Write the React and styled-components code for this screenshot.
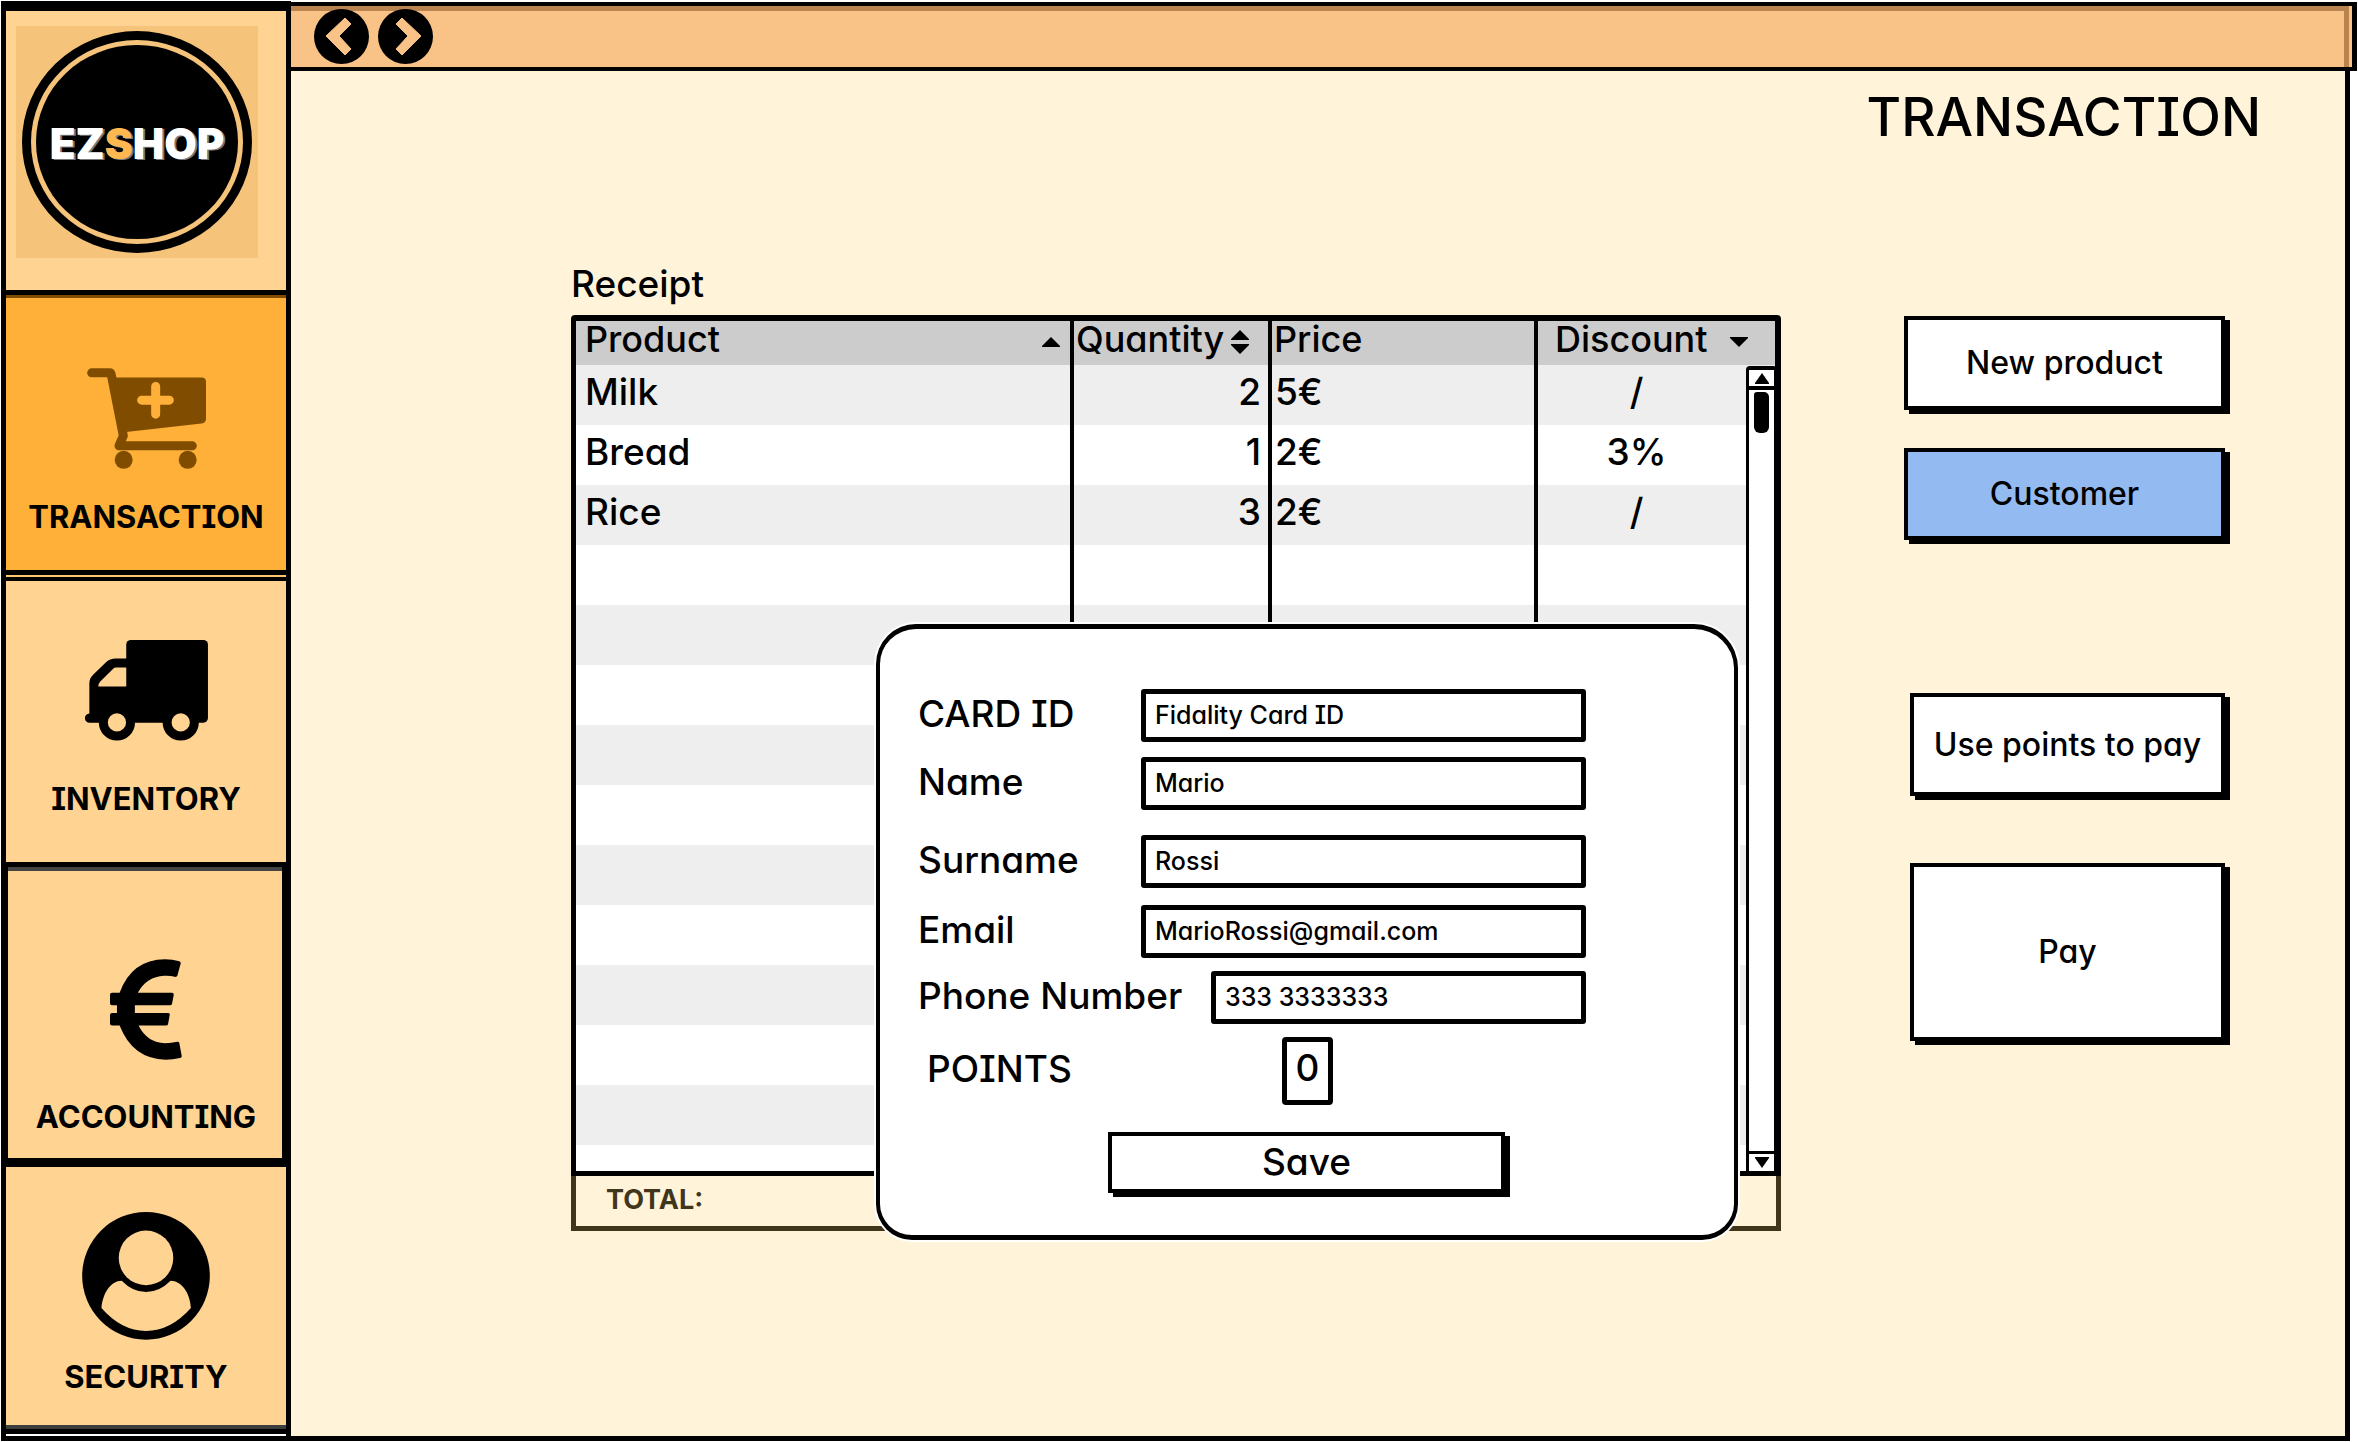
import React from "react";
import styled, { createGlobalStyle, css } from "styled-components";

const ink = "#000";
const cream = "#fff4d9";
const peach = "#ffd391";

const GlobalStyle = createGlobalStyle`
  *, *::before, *::after { box-sizing: border-box; }
  body {
    margin: 0;
    background: #fff;
    color: ${ink};
    font-family: Inter, "Open Sans", sans-serif;
    font-weight: 500;
    font-feature-settings: "cv11", "cv08";
  }
  button, input {
    font: inherit;
    font-feature-settings: inherit;
    color: inherit;
  }
  h1, h2, p { margin: 0; font-weight: 500; }
`;

const Shell = styled.div`
  display: grid;
  grid-template-columns: 291px minmax(0, 1fr);
  min-height: 100vh;
  padding: 1px 1px 1px 0;
`;

/* ---------- sidebar ---------- */

const Sidebar = styled.nav`
  display: flex;
  flex-direction: column;
  margin-left: 1px;
  border: solid ${ink};
  border-width: 10px 5px 5px;
  background: #fff;
`;

const LogoCell = styled.div`
  padding: 15px 28px 32px 10px;
  background: ${peach};
`;

const LogoTile = styled.div`
  height: 232px;
  padding: 5px 6px;
  background: #f5c379;
`;

const LogoRing = styled.div`
  height: 100%;
  padding: 5px;
  border: 9px solid ${ink};
  border-radius: 50%;
`;

const LogoDisc = styled.div`
  display: flex;
  align-items: center;
  justify-content: center;
  height: 100%;
  padding-top: 4px;
  border-radius: 50%;
  background: ${ink};
  color: #fff;
  font-size: 42px;
  font-weight: 900;
  line-height: 48px;
  text-shadow: 2px 1px 0 #77797c;
`;

const LogoAccent = styled.span`
  color: #ffb84f;
`;

const NavItem = styled.a`
  position: relative;
  display: flex;
  flex-direction: column;
  align-items: center;
  gap: ${(p) => p.$gap}px;
  padding: ${(p) => p.$top}px 0 ${(p) => p.$bottom}px;
  border-top: ${(p) => p.$line || 5}px solid ${ink};
  background: ${(p) => (p.$active ? "#ffb038" : peach)};
  box-shadow: ${(p) => p.$inset || "none"};
  color: ${ink};
  font-size: 31px;
  font-weight: 700;
  line-height: 40px;
  text-decoration: none;
  ${(p) =>
    p.$active &&
    css`
      border-bottom: 5px solid ${ink};
      margin-bottom: 2px;
    `}
  &:last-child { border-bottom: 5px solid ${ink}; }
  svg { display: block; }
`;

/* ---------- page ---------- */

const Page = styled.div`
  display: flex;
  flex-direction: column;
  min-width: 0;
`;

const TopBar = styled.header`
  position: relative;
  display: flex;
  gap: 9px;
  margin-top: 1px;
  padding: 3px 23px;
  border: solid ${ink};
  border-width: 4px 5px 4px 0;
  background: #f9c387;
  &::after {
    content: "";
    position: absolute;
    inset: 0 3px 0 0;
    border: solid #b98450;
    border-width: 5px 5px 0 0;
    pointer-events: none;
  }
`;

const RoundButton = styled.button`
  position: relative;
  z-index: 1;
  display: block;
  width: 55px;
  height: 55px;
  padding: 0;
  border: 0;
  border-radius: 50%;
  background: ${ink};
  svg { display: block; }
`;

const Content = styled.main`
  flex: 1;
  margin-right: 7px;
  padding: 16px 0 0;
  border: solid ${ink};
  border-width: 0 5px 5px 0;
  background: ${cream};
`;

const Title = styled.h1`
  padding-right: 84px;
  font-size: 53px;
  line-height: 60px;
  text-align: right;
`;

const Workspace = styled.div`
  display: flex;
  align-items: flex-start;
  gap: 123px;
  margin-top: 113px;
  padding: 0 120px 0 280px;
`;

/* ---------- receipt ---------- */

const Receipt = styled.section`
  position: relative;
  flex: 1;
  min-width: 0;
`;

const SectionTitle = styled.h2`
  padding-bottom: 7px;
  font-size: 37px;
  line-height: 48px;
`;

const TableFrame = styled.div`
  position: relative;
  border: solid ${ink};
  border-width: 6px 6px 5px 5px;
  border-radius: 4px 4px 0 0;
  background: #fff;
`;

const Table = styled.table`
  width: 100%;
  table-layout: fixed;
  border-spacing: 0;
  font-size: 37px;
  line-height: 36px;
`;

const Column = styled.col`
  width: ${(p) => p.$width};
`;

const HeadCell = styled.th`
  height: 44px;
  padding: 0 ${(p) => p.$right || 0}px 8px ${(p) => p.$left}px;
  border-right: ${(p) => (p.$last ? 0 : 4)}px solid ${ink};
  background: #ccc;
  font-size: 36px;
  font-weight: 500;
  text-align: left;
`;

const SortButton = styled.button`
  display: flex;
  align-items: center;
  justify-content: ${(p) => (p.$spread ? "space-between" : "flex-start")};
  gap: ${(p) => p.$gap || 0}px;
  width: 100%;
  padding: 0;
  border: 0;
  background: none;
  line-height: 36px;
  svg { flex: none; margin-top: 5px; }
`;

const Row = styled.tr`
  height: ${(p) => (p.$short ? 26 : 60)}px;
  &:nth-child(odd) { background: #eee; }
`;

const Cell = styled.td`
  padding: ${(p) => p.$pad};
  border-right: ${(p) => (p.$last ? 0 : 4)}px solid ${ink};
  text-align: ${(p) => p.$align || "left"};
`;

const ScrollBar = styled.div`
  position: absolute;
  top: 45px;
  right: -2px;
  bottom: 0;
  display: flex;
  flex-direction: column;
  width: 31px;
  border: solid ${ink};
  border-width: 4px 3px 0 3px;
  border-radius: 4px 4px 0 0;
  background: #fff;
`;

const ScrollButton = styled.button`
  display: flex;
  align-items: center;
  justify-content: center;
  height: 20px;
  padding: 0;
  border: solid ${ink};
  border-width: ${(p) => (p.$down ? "3px 0 0" : "0 0 4px")};
  background: #fff;
`;

const ScrollTrack = styled.div`
  flex: 1;
  padding: 2px 5px;
`;

const ScrollThumb = styled.div`
  height: 41px;
  border-radius: 3px 5px 6px 6px;
  background: ${ink};
`;

const Total = styled.p`
  height: 55px;
  padding: 6px 30px 0;
  border: solid #3f361b;
  border-width: 0 5px 5px;
  box-shadow: 0 -1px 0 #fff;
  color: #3f361b;
  font-size: 27px;
  font-weight: 700;
  line-height: 36px;
`;

/* ---------- customer dialog ---------- */

const Dialog = styled.form`
  position: absolute;
  top: 364px;
  left: 305px;
  right: 43px;
  display: flex;
  flex-direction: column;
  padding: 60px 148px 42px 38px;
  border: 5px solid ${ink};
  border-width: 5px 4px;
  border-radius: 40px 44px 36px 36px;
  background: #fff;
  box-shadow: 0 0 0 2px #fff;
`;

const Field = styled.div`
  display: flex;
  align-items: center;
  margin-bottom: ${(p) => p.$after}px;
`;

const Label = styled.label`
  flex: 0 0 ${(p) => p.$width || 223}px;
  padding: 0 0 4px ${(p) => p.$indent || 0}px;
  font-size: 37px;
  line-height: 44px;
  white-space: nowrap;
`;

const TextInput = styled.input`
  flex: 1;
  min-width: 0;
  height: 53px;
  padding: 0 10px 2px 9px;
  border: 5px solid ${ink};
  border-radius: 3px;
  background: #fff;
  font-size: 25px;
`;

const PointsInput = styled.input`
  width: 51px;
  height: 68px;
  padding: 0 0 8px;
  border: 5px solid ${ink};
  border-radius: 4px;
  background: #fff;
  font-size: 37px;
  text-align: center;
`;

/* ---------- buttons ---------- */

const Actions = styled.div`
  display: flex;
  flex-direction: column;
  align-items: flex-end;
  width: 321px;
  padding-top: 56px;
`;

const SketchButton = styled.button`
  width: ${(p) => p.$width || "100%"};
  height: ${(p) => p.$height}px;
  margin: ${(p) => p.$margin || 0};
  padding: 0 0 ${(p) => (p.$large ? 2 : 0)}px;
  border: 4px solid ${ink};
  background: ${(p) => (p.$selected ? "#94baf2" : "#fff")};
  box-shadow: 5px 4px 0 ${ink};
  font-size: ${(p) => (p.$large ? 37 : 32)}px;
  line-height: 40px;
  white-space: nowrap;
`;

/* ---------- drawings ---------- */

const CartIcon = () => (
  <svg width="119" height="101" viewBox="258 265 357 302" fill="#804d00" aria-hidden="true">
    <path
      d="M272 279H326Q330 279 331 285L367 468L354 498H574"
      fill="none"
      stroke="#804d00"
      strokeWidth="27"
      strokeLinecap="round"
      strokeLinejoin="round"
    />
    <path d="M330 293H602Q615 293 615 306V417Q615 429 602 431L355 459Z" />
    <path d="M464 320V403M422 361H505" stroke="#ffb038" strokeWidth="27" strokeLinecap="round" />
    <circle cx="368" cy="540" r="27" />
    <circle cx="560" cy="540" r="27" />
  </svg>
);

const TruckIcon = () => (
  <svg width="123" height="101" viewBox="260 240 370 304" aria-hidden="true">
    <rect x="384" y="240" width="246" height="249" rx="14" />
    <path d="M400 296H352Q335 296 323 307L285 344Q273 355 273 371V461A14 14 0 0 0 274 489H400Z" />
    <path d="M384 323H354Q348 323 344 327L306 365Q300 371 300 380H384Z" fill={peach} />
    <circle cx="356" cy="488" r="41" fill={peach} stroke={ink} strokeWidth="27" />
    <circle cx="548" cy="488" r="41" fill={peach} stroke={ink} strokeWidth="27" />
  </svg>
);

const EuroIcon = () => (
  <svg width="72" height="101" viewBox="327 297 217 303" aria-hidden="true">
    <path
      d="M493 297Q515 297 536 303Q541 305 540 310L530 347Q528 351 522 350Q508 346 490 347Q437 350 411 398H514Q520 398 519 405L514 431Q513 436 508 436H402V459H502Q508 459 507 465L502 492Q501 497 496 497H413Q440 550 493 550Q512 550 530 546Q535 545 536 550L543 588Q544 594 538 595Q516 600 495 600Q395 598 356 497H333Q327 497 327 491V465Q327 459 333 459H348V436H333Q327 436 327 430V404Q327 398 333 398H356Q392 298 493 297Z"
    />
  </svg>
);

const UserIcon = () => (
  <svg width="128" height="128" viewBox="246 216 384 385" aria-hidden="true">
    <circle cx="438" cy="408" r="192" />
    <circle cx="438" cy="354" r="82" fill={peach} />
    <path
      d="M365 423Q398 457 438 457Q478 457 512 423C545 423 571 460 573 505Q512 574 438 574Q364 574 304 505C308 460 332 423 365 423Z"
      fill={peach}
    />
  </svg>
);

const Chevron = ({ right }) => (
  <svg width="55" height="55" viewBox="0 0 55 55" aria-hidden="true">
    <path
      d={right ? "M24 9L43 27L24 46L18 40L30 27L18 15Z" : "M31 9L12 27L31 46L37 40L25 27L37 15Z"}
      fill="#f9c387"
      stroke="#f9c387"
      strokeWidth="1"
      strokeLinejoin="round"
    />
  </svg>
);

const ArrowUp = ({ width = 18, height = 10 }) => (
  <svg width={width} height={height} viewBox="0 0 18 10" preserveAspectRatio="none" aria-hidden="true">
    <path d="M9 0L18 9V10H0V9Z" />
  </svg>
);

const ArrowDown = ({ width = 18, height = 10 }) => (
  <svg width={width} height={height} viewBox="0 0 18 10" preserveAspectRatio="none" aria-hidden="true">
    <path d="M9 10L18 1V0H0V1Z" />
  </svg>
);

const ArrowBoth = () => (
  <svg width="18" height="24" viewBox="0 0 18 24" aria-hidden="true">
    <path d="M9 0L18 9V10H0V9ZM9 24L18 15V14H0V15Z" />
  </svg>
);

const items = [
  { product: "Milk", quantity: 2, price: "5€", discount: "/" },
  { product: "Bread", quantity: 1, price: "2€", discount: "3%" },
  { product: "Rice", quantity: 3, price: "2€", discount: "/" },
];
const blankRows = Array.from({ length: 11 }, () => ({}));
const rows = [...items, ...blankRows];

const fields = [
  { id: "card", label: "CARD ID", value: "Fidality Card ID", after: 15 },
  { id: "name", label: "Name", value: "Mario", after: 25 },
  { id: "surname", label: "Surname", value: "Rossi", after: 17 },
  { id: "email", label: "Email", value: "MarioRossi@gmail.com", after: 13 },
  { id: "phone", label: "Phone Number", value: "333 3333333", after: 13, width: 293 },
];

export default function App() {
  return (
    <>
      <GlobalStyle />
      <Shell>
        <Sidebar>
          <LogoCell>
            <LogoTile>
              <LogoRing>
                <LogoDisc>
                  EZ<LogoAccent>S</LogoAccent>HOP
                </LogoDisc>
              </LogoRing>
            </LogoTile>
          </LogoCell>
          <NavItem
            href="#transaction"
            $active
            $top={73}
            $gap={28}
            $bottom={33}
            $inset="inset 0 3px 0 #804d00, 0 2px 0 #ffc56e"
          >
            <CartIcon />
            TRANSACTION
          </NavItem>
          <NavItem href="#inventory" $line={4} $top={59} $gap={38} $bottom={43}>
            <TruckIcon />
            INVENTORY
          </NavItem>
          <NavItem
            href="#accounting"
            $top={92}
            $gap={37}
            $bottom={21}
            $inset="inset 2px 0 0 #000, inset -4px 0 0 #000, inset 0 4px 0 #444"
          >
            <EuroIcon />
            ACCOUNTING
          </NavItem>
          <NavItem href="#security" $line={9} $top={45} $gap={17} $bottom={32} $inset="inset 0 -4px 0 #3c3e3e">
            <UserIcon />
            SECURITY
          </NavItem>
        </Sidebar>

        <Page>
          <TopBar>
            <RoundButton aria-label="Back">
              <Chevron />
            </RoundButton>
            <RoundButton aria-label="Forward">
              <Chevron right />
            </RoundButton>
          </TopBar>

          <Content>
            <Title>TRANSACTION</Title>
            <Workspace>
              <Receipt>
                <SectionTitle>Receipt</SectionTitle>
                <TableFrame>
                  <Table>
                    <colgroup>
                      <Column />
                      <Column $width="198px" />
                      <Column $width="266px" />
                      <Column $width="237px" />
                    </colgroup>
                    <thead>
                      <tr>
                        <HeadCell $left={9} $right={10}>
                          <SortButton $spread>
                            Product <ArrowUp />
                          </SortButton>
                        </HeadCell>
                        <HeadCell $left={2}>
                          <SortButton $gap={7}>
                            Quantity <ArrowBoth />
                          </SortButton>
                        </HeadCell>
                        <HeadCell $left={2}>Price</HeadCell>
                        <HeadCell $left={17} $last>
                          <SortButton $gap={22}>
                            Discount <ArrowDown />
                          </SortButton>
                        </HeadCell>
                      </tr>
                    </thead>
                    <tbody>
                      {rows.map((row, i) => (
                        <Row key={i} $short={i === rows.length - 1}>
                          <Cell $pad="0 9px 6px">{row.product}</Cell>
                          <Cell $pad="0 7px 6px" $align="right">{row.quantity}</Cell>
                          <Cell $pad="0 3px 6px">{row.price}</Cell>
                          <Cell $pad="0 40px 6px 0" $align="center" $last>{row.discount}</Cell>
                        </Row>
                      ))}
                    </tbody>
                  </Table>
                  <ScrollBar>
                    <ScrollButton type="button" aria-label="Scroll up">
                      <ArrowUp width={14} height={11} />
                    </ScrollButton>
                    <ScrollTrack>
                      <ScrollThumb />
                    </ScrollTrack>
                    <ScrollButton type="button" aria-label="Scroll down" $down>
                      <ArrowDown width={14} height={11} />
                    </ScrollButton>
                  </ScrollBar>
                </TableFrame>
                <Total>TOTAL:</Total>

                <Dialog aria-label="Customer" onSubmit={(e) => e.preventDefault()}>
                  {fields.map((f) => (
                    <Field key={f.id} $after={f.after}>
                      <Label htmlFor={f.id} $width={f.width}>{f.label}</Label>
                      <TextInput id={f.id} defaultValue={f.value} />
                    </Field>
                  ))}
                  <Field $after={27}>
                    <Label htmlFor="points" $width={364} $indent={9}>POINTS</Label>
                    <PointsInput id="points" defaultValue="0" />
                  </Field>
                  <SketchButton type="submit" $large $width="397px" $height={61} $margin="0 0 0 190px">
                    Save
                  </SketchButton>
                </Dialog>
              </Receipt>

              <Actions>
                <SketchButton $height={94}>New product</SketchButton>
                <SketchButton $height={92} $margin="38px 0 0" $selected>Customer</SketchButton>
                <SketchButton $height={103} $width="315px" $margin="153px 0 0">Use points to pay</SketchButton>
                <SketchButton $height={178} $width="315px" $margin="67px 0 0">Pay</SketchButton>
              </Actions>
            </Workspace>
          </Content>
        </Page>
      </Shell>
    </>
  );
}
